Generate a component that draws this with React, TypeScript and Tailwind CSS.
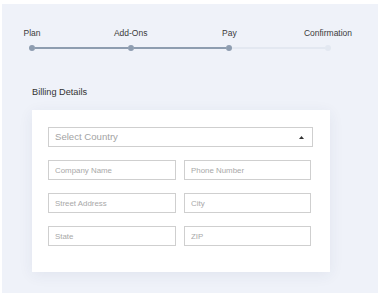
import React from 'react'

const steps = ['Plan', 'Add-Ons', 'Pay', 'Confirmation']
const fields = ['Company Name', 'Phone Number', 'Street Address', 'City', 'State', 'ZIP']

export default function App() {
  return (
    <div className="w-[378px] h-[295px] bg-white" style={{ fontFamily: '"Liberation Sans", Arial, sans-serif' }}>
      <div className="ml-[2px] pt-[24px] mt-[4px] h-[289px] w-[376px] bg-[#eff2f9]">
        {/* stepper */}
        <div className="ml-[27px] w-[302px]">
          <div className="flex justify-between px-[3px] h-[10px]">
            {steps.map((s) => (
              <div key={s} className="w-0 flex justify-center">
                <span className="whitespace-nowrap text-[8.5px] leading-[10px] text-[#3a3a3a]">{s}</span>
              </div>
            ))}
          </div>
          <div className="flex items-center mt-[7px] h-[6px]">
            <div className="w-[6px] h-[6px] rounded-full bg-[#8e9db0]" />
            <div className="flex-1 h-[2px] bg-[#8e9db0]" />
            <div className="w-[6px] h-[6px] rounded-full bg-[#8e9db0]" />
            <div className="flex-1 h-[2px] bg-[#8e9db0]" />
            <div className="w-[6px] h-[6px] rounded-full bg-[#8e9db0]" />
            <div className="flex-1 h-[2px] bg-[#e3e8f1]" />
            <div className="w-[6px] h-[6px] rounded-full bg-[#e3e8f1]" />
          </div>
        </div>

        <div className="ml-[30px] mt-[35px] text-[9.2px] leading-[12px] text-[#333]">Billing Details</div>

        {/* card */}
        <div className="ml-[30px] mt-[12px] w-[298px] h-[162px] bg-white shadow-[0_3px_14px_rgba(40,60,100,0.07)] pt-[17px] pl-[16px]">
          <div className="w-[265px] h-[20px] border border-[#cfcfcf] flex items-center justify-between pl-[6px] pr-[8px]">
            <span className="text-[9.6px] text-[#a3a3a3]">Select Country</span>
            <svg width="5" height="3" viewBox="0 0 5 3">
              <path d="M0 3 L2.5 0 L5 3 Z" fill="#333" />
            </svg>
          </div>
          <div className="grid grid-cols-[128px_127px] gap-x-[8px] gap-y-[13px] mt-[13px]">
            {fields.map((f) => (
              <input
                key={f}
                placeholder={f}
                className="h-[20px] border border-[#cfcfcf] px-[6px] text-[7.9px] outline-none placeholder:text-[#a8a8a8]"
              />
            ))}
          </div>
        </div>
      </div>
    </div>
  )
}
